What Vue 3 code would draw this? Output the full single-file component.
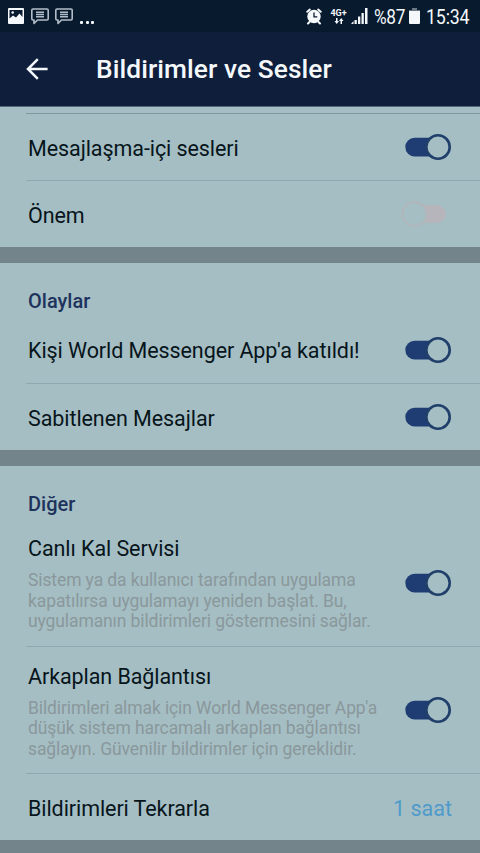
<script setup>
import { ref } from 'vue'

const sections = ref([
  {
    id: 'chat',
    rows: [
      { label: 'Mesajlaşma-içi sesleri', on: true, size: 'r67' },
      { label: 'Önem', on: false, size: 'r67' },
    ],
  },
  {
    id: 'events',
    title: 'Olaylar',
    rows: [
      { label: "Kişi World Messenger App'a katıldı!", on: true, size: 'r66' },
      { label: 'Sabitlenen Mesajlar', on: true, size: 'r67' },
    ],
  },
  {
    id: 'other',
    title: 'Diğer',
    rows: [
      {
        label: 'Canlı Kal Servisi',
        lines: [
          'Sistem ya da kullanıcı tarafından uygulama',
          'kapatılırsa uygulamayı yeniden başlat. Bu,',
          'uygulamanın bildirimleri göstermesini sağlar.',
        ],
        on: true,
        size: 'tall',
      },
      {
        label: 'Arkaplan Bağlantısı',
        lines: [
          "Bildirimleri almak için World Messenger App'a",
          'düşük sistem harcamalı arkaplan bağlantısı',
          'sağlayın. Güvenilir bildirimler için gereklidir.',
        ],
        on: true,
        size: 'tall',
      },
      { label: 'Bildirimleri Tekrarla', value: '1 saat', size: 'r67' },
    ],
  },
])
</script>

<template>
  <div class="screen">
    <div class="status">
      <div class="left">
        <svg width="16" height="16" viewBox="0 0 16 16">
          <path fill="#f4f8fb" fill-rule="evenodd" d="M1 0h14a1 1 0 0 1 1 1v14a1 1 0 0 1-1 1H1a1 1 0 0 1-1-1V1a1 1 0 0 1 1-1zM1.500 2v8.500l3.500-3 3 2 3.500-4 3 3.500V2z" />
          <circle cx="4.700" cy="4.500" r="1.300" fill="#f4f8fb" />
        </svg>
        <svg v-for="n in 2" :key="n" class="bubble" width="18" height="17" viewBox="0 0 18 17">
          <path fill="none" stroke="#b3bdc8" stroke-width="1.600" stroke-linejoin="round" d="M2 1h14q1.200 0 1.200 1.200v8.600q0 1.200-1.200 1.200H6.500L3 15.500V12H2Q.8 12 .8 10.800V2.200Q.8 1 2 1z" />
          <path stroke="#b3bdc8" stroke-width="1.500" d="M5 4.300h8M5 6.500h8M5 8.700h8" />
        </svg>
        <span class="more"><i /><i /><i /></span>
      </div>
      <div class="right">
        <svg class="alarm" width="16" height="17" viewBox="0 0 16 17">
          <path stroke="#f4f8fb" stroke-width="2" stroke-linecap="round" d="M1.300 3.800l2.500-2.200M14.700 3.800l-2.500-2.200M3.500 14l-1.500 1.500M12.500 14l1.500 1.500" />
          <circle cx="8" cy="8.500" r="6.700" fill="#f4f8fb" />
          <path fill="none" stroke="#0a1a30" stroke-width="1.300" d="M8 4.500v4.300h3.300" />
        </svg>
        <span class="net">
          <span class="gen">4G+</span>
          <svg width="10" height="6" viewBox="0 0 10 6">
            <path fill="#f4f8fb" d="M2 0h1.500v3H5L2.750 6 .5 3H2zM6.500 6H8V3h1.500L7.250 0 5 3h1.500z" />
          </svg>
        </span>
        <svg class="signal" width="17" height="16" viewBox="0 0 17 16">
          <path fill="#f4f8fb" d="M0 16l2.500-3v3zM3.500 12h2.300v4H3.500zM7 8.500h2.300V16H7zM10.500 5h2.300v11h-2.300zM14 0h2.500v16H14z" />
        </svg>
        <span class="pct">%87</span>
        <svg class="battery" width="11" height="16" viewBox="0 0 11 16">
          <path fill="#6c7884" d="M3 0h5v2h3v2H0V2h3z" />
          <path fill="#f4f8fb" d="M0 3h11v12a1 1 0 0 1-1 1H1a1 1 0 0 1-1-1z" />
        </svg>
        <span class="clock">15:34</span>
      </div>
    </div>

    <header class="bar">
      <svg class="back" width="22" height="22" viewBox="0 0 22 22">
        <path fill="none" stroke="#f4f8fb" stroke-width="2.500" d="M11.800 1.200L2 11l9.800 9.800M2 11h19.600" />
      </svg>
      <h1>Bildirimler ve Sesler</h1>
    </header>

    <main>
      <section v-for="s in sections" :key="s.id" :class="s.id">
        <h2 v-if="s.title">{{ s.title }}</h2>
        <div v-for="r in s.rows" :key="r.label" class="row" :class="r.size">
          <div class="text">
            <div class="label">{{ r.label }}</div>
            <div v-if="r.lines" class="desc">
              <div v-for="l in r.lines" :key="l">{{ l }}</div>
            </div>
          </div>
          <span v-if="r.value" class="value">{{ r.value }}</span>
          <svg v-else class="toggle" width="52" height="28" viewBox="0 0 52 28">
            <template v-if="r.on">
              <rect x="5.300" y="4.800" width="36" height="18.600" rx="9.300" fill="#1f3d73" />
              <circle cx="38" cy="14" r="11.700" fill="#a5bec4" stroke="#203f6a" stroke-width="2.600" />
            </template>
            <template v-else>
              <rect x="16" y="5" width="30" height="18" rx="9" fill="#b5b5bb" />
              <circle cx="14.500" cy="14" r="12" fill="#a5bec4" stroke="#b1b6bb" stroke-width="1.800" />
            </template>
          </svg>
        </div>
      </section>
    </main>
  </div>
</template>

<style>
body {
  background: #73858b;
}
</style>

<style scoped>
.screen {
  width: 480px;
  height: 853px;
  overflow: hidden;
  background: #73858b;
  font-family: Roboto, 'Noto Sans', sans-serif;
  color: #07151b;
}
.status {
  height: 32px;
  box-sizing: border-box;
  padding: 0 10px 0 8px;
  background: #081a2e;
  color: #f4f8fb;
  display: flex;
  justify-content: space-between;
  align-items: center;
}
.left,
.right {
  display: flex;
  align-items: center;
}
.bubble {
  margin-left: 7px;
}
.bubble + .bubble {
  margin-left: 6px;
}
.more {
  display: flex;
  gap: 2.500px;
  margin: 13px 0 0 7px;
}
.more i {
  width: 3px;
  height: 3px;
  border-radius: 1px;
  background: #f4f8fb;
}
.net {
  width: 17px;
  margin-left: 8px;
  display: flex;
  flex-direction: column;
  align-items: center;
}
.gen {
  font-size: 9px;
  line-height: 9px;
  font-weight: 700;
  white-space: nowrap;
}
.signal {
  margin-left: 4px;
}
.pct,
.clock {
  font-size: 20px;
  line-height: 32px;
  white-space: nowrap;
  transform-origin: left center;
  padding-top: 2px;
}
.pct {
  margin-left: 6px;
  width: 31px;
  letter-spacing: -0.300px;
  transform: scaleX(0.860);
}
.battery {
  margin-left: 4px;
}
.clock {
  margin-left: 6px;
  width: 44px;
  letter-spacing: -0.200px;
  transform: scaleX(0.890);
}
.bar {
  height: 74px;
  background: #0f1e3b;
  color: #f4f8fb;
  display: flex;
  align-items: center;
  padding-left: 26px;
  border-bottom: 1px solid #53687a;
}
h1 {
  margin: 0 0 0 48px;
  font-size: 26.300px;
  letter-spacing: 0.080px;
  font-weight: 500;
  line-height: 74px;
  white-space: nowrap;
}
section {
  background: #a5bec4;
  margin-bottom: 16px;
}
.chat {
  padding-top: 6px;
}
.chat .row:first-child {
  border-top: 1px solid #80979f;
}
h2 {
  margin: 0;
  height: 53px;
  box-sizing: border-box;
  padding: 25px 0 0 28px;
  font-size: 20px;
  line-height: 26px;
  font-weight: 500;
  color: #1d335c;
}
.row {
  margin-left: 26px;
  padding: 0 28px 0 2px;
  display: flex;
  align-items: center;
  justify-content: space-between;
  white-space: nowrap;
}
.row + .row {
  border-top: 1px solid #8fa7ae;
}
.r67 {
  height: 66px;
}
.r66 {
  height: 67px;
}
.tall {
  height: 126px;
}
.tall:nth-child(2) {
  height: 127px;
}
.text {
  padding-top: 3px;
}
.tall .text {
  padding-top: 2px;
}
.label {
  font-size: 21.500px;
  letter-spacing: -0.080px;
  line-height: 28px;
}
.desc {
  margin-top: 7px;
  font-size: 17.500px;
  letter-spacing: -0.110px;
  line-height: 20.500px;
  color: #8a989b;
}
.toggle {
  flex: none;
}
.value {
  padding-top: 3px;
  font-size: 21.500px;
  color: #4f9aca;
}
</style>
